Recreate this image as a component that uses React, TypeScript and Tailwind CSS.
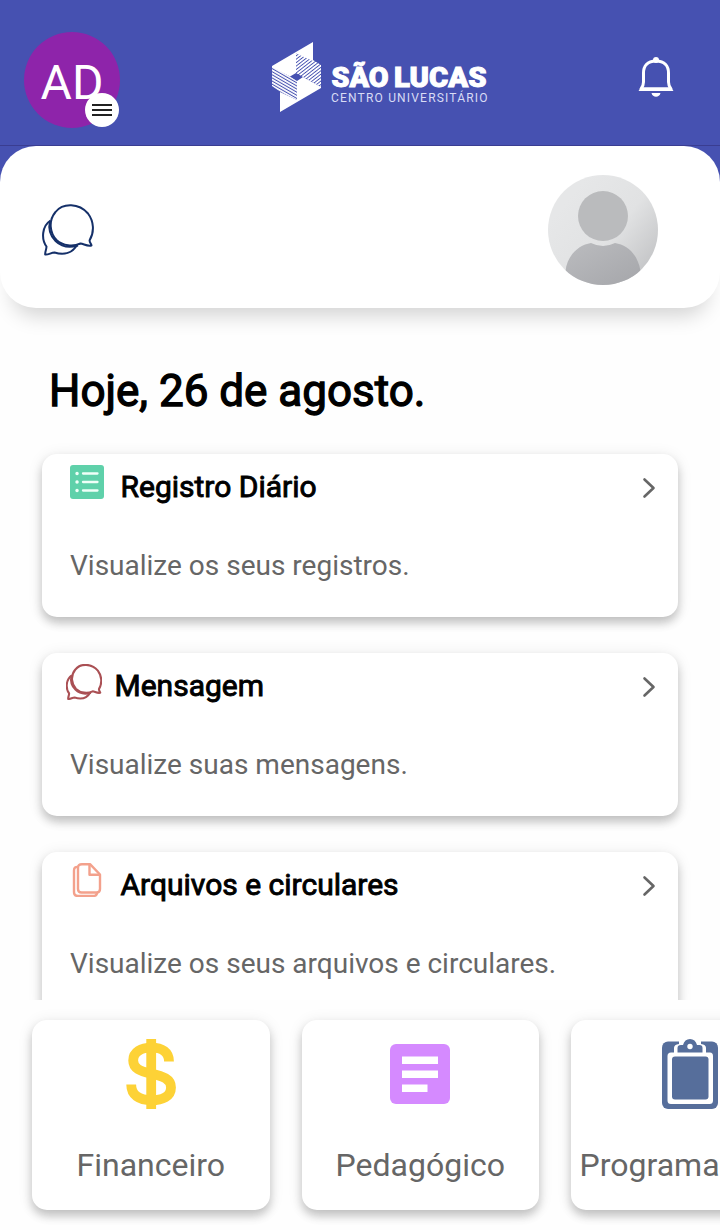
import type { ReactNode } from "react";

const ChatIcon = ({ className }: { className: string }) => (
    <svg viewBox="0 0 52 52" fill="none" stroke="currentColor" strokeLinejoin="round" className={className}>
        <path d="M47.600 36.300C52.500 28 52 17.500 46 9.500C37 -1 21 -1.500 13.500 8C6 17 8 29 14.500 36C21 42 31 43 38.500 39.500C42 40 45 42.500 49.500 41.500C49.300 40 47.500 38.500 47.600 36.300Z" />
        <path d="M8.500 16.500C0 22 -1 35 4.500 42.500C4.500 45.500 2.800 48 3.200 50.500C6.500 51 9 48.500 12.500 48.500C22 51.500 30.500 49 35 41" />
        <path d="M8 17C4.500 32 17 47 36 41.500" />
    </svg>
);

const ListIcon = () => (
    <svg viewBox="0 0 34 34" className="size-[34px]">
        <rect width="34" height="34" rx="3" fill="#5fd1aa" />
        <g stroke="#effff8" strokeWidth="2.300" strokeLinecap="round">
            <path d="M13 8.500H27.500M13 17H27.500M13 25.500H27.500" />
            <path d="M7 8.500H7.100M7 17H7.100M7 25.500H7.100" strokeWidth="3.400" />
        </g>
    </svg>
);

const FilesIcon = () => (
    <svg viewBox="0 0 34 34" fill="none" stroke="#f3a18c" strokeWidth="2.400" strokeLinejoin="round" className="size-[34px]">
        <path d="M8.500 4C5.500 3.500 4 4.500 4 7.500V29C4 32 5 33 8 33H23C26 33 27 32 27 29.500" />
        <path d="M12 1.200H20L30 11.500V26C30 28.500 29 29.500 26.500 29.500H11.500C9 29.500 8 28.500 8 26V5C8 2.500 9 1.200 12 1.200Z" />
        <path d="M19.500 1.500V11.700H30" />
    </svg>
);

const ChevronIcon = () => (
    <svg viewBox="0 0 14 22" fill="none" stroke="#666" strokeWidth="2.600" strokeLinecap="round" strokeLinejoin="round" className="h-[22px] w-[14px]">
        <path d="M2.500 2.500L11.500 11L2.500 19.500" />
    </svg>
);

const BellIcon = () => (
    <svg viewBox="0 0 36 42" className="h-[42px] w-9">
        <path d="M18 5C9 5 5.500 10.500 5.500 17V26C5.500 29 5 30.500 3 33H33C31 30.500 30.500 29 30.500 26V17C30.500 10.500 27 5 18 5Z" fill="none" stroke="white" strokeWidth="3" strokeLinejoin="round" />
        <path d="M.5 35L3 31.500H33L35.500 35Z" fill="white" />
        <circle cx="18" cy="4" r="3" fill="white" />
        <path d="M13.500 37H22.500C21.500 42 14.500 42 13.500 37Z" fill="white" />
    </svg>
);

const Logo = () => (
    <svg viewBox="0 0 216 72" fill="white" className="h-[72px] w-[216px]">
        <defs>
            <pattern id="hatchLeft" width="4" height="2.700" patternUnits="userSpaceOnUse" patternTransform="rotate(30)">
                <rect width="4" height="1.700" fill="white" />
            </pattern>
            <pattern id="hatchRight" width="4" height="2.700" patternUnits="userSpaceOnUse" patternTransform="rotate(-38)">
                <rect width="4" height="1.800" fill="white" />
            </pattern>
        </defs>
        <path d="M41 1V20L24 12.500V32L18 35.500L0 26V25Z" />
        <path d="M8 71V51L25 59V40L31 36L49 46V47Z" />
        <path d="M0 25L18 35.500L25 40V59L8 51L0 45Z" fill="url(#hatchLeft)" />
        <path d="M24 12.500L41 19L49 24V46L31 36L24 32Z" fill="url(#hatchRight)" />
        <g stroke="white" strokeWidth="1" className="font-[Roboto,sans-serif] text-[28px] font-black">
            <text x="59.500" y="45.500" textLength="57" lengthAdjust="spacingAndGlyphs">SÃO</text>
            <text x="122" y="45.500" textLength="92.500" lengthAdjust="spacingAndGlyphs">LUCAS</text>
        </g>
        <text x="59" y="60.500" textLength="156.500" fill="#d9dcf5" className="font-[Roboto,sans-serif] text-[12px]">CENTRO UNIVERSITÁRIO</text>
    </svg>
);

const DollarIcon = () => (
    <svg viewBox="0 0 50 70" fill="none" stroke="#fdd236" strokeWidth="9.800" className="h-[70px] w-[50px]">
        <path d="M43 22.500C43 13 36 8.700 25.500 8.700C15 8.700 7.200 13 7.200 21.500C7.200 29.500 14 32 25 34.500C37 37.200 45 40 45 48.500C45 57.500 36.500 61.200 25.500 61.200C13 61.200 5.200 56 5.200 45.500" />
        <path d="M25.200 0V70" />
    </svg>
);

const ArticleIcon = () => (
    <svg viewBox="0 0 60 60" className="size-[60px]">
        <rect width="60" height="60" rx="6" fill="#d58aff" />
        <path d="M12 12.500H48V20H12ZM12 26.500H48V34H12ZM12 40.500H37.500V48H12Z" fill="white" />
    </svg>
);

const ClipboardIcon = () => (
    <svg viewBox="0 0 56 70" className="h-[70px] w-14">
        <rect y="2.500" width="56" height="67.500" rx="6" fill="#566e9b" />
        <path d="M17 0H39V5Q44 5.500 44 9V13.500H48Q51 13.500 51 17V61.500Q51 65 47.500 65H9Q5.500 65 5.500 61.500V17Q5.500 13.500 9 13.500H12V9Q12 5.500 17 5Z" fill="white" />
        <rect x="10" y="17.500" width="36.500" height="43" rx="3" fill="#566e9b" />
        <path d="M15.500 13.500V9Q15.500 6 19 6H21C22 2 24.500 0 28 0C31.500 0 34 2 35 6H37.500Q40.500 6 40.500 9V13.500Z" fill="#566e9b" />
        <circle cx="28" cy="7.500" r="2.700" fill="white" />
    </svg>
);

const UserPhoto = () => (
    <svg viewBox="0 0 110 110" className="size-[110px]">
        <defs>
            <linearGradient id="photoBg" x1="0.2" y1="0.2" x2="1" y2="0.85">
                <stop offset="0" stopColor="#e6e7e8" />
                <stop offset=".5" stopColor="#e1e2e3" />
                <stop offset="1" stopColor="#c0c1c3" />
            </linearGradient>
            <linearGradient id="photoBody" x1="0" y1="0" x2="1" y2="1">
                <stop offset="0" stopColor="#bbbcbf" />
                <stop offset="1" stopColor="#a5a6aa" />
            </linearGradient>
            <clipPath id="photoClip"><circle cx="55" cy="55" r="55" /></clipPath>
        </defs>
        <g clipPath="url(#photoClip)">
            <rect width="110" height="110" fill="url(#photoBg)" />
            <path d="M17.500 96C19 81 30 70 43 68Q55 74 67 68C80 70 90 80 92.500 96V110H17.500Z" fill="url(#photoBody)" />
            <circle cx="55" cy="41" r="25" fill="#babbbd" />
        </g>
    </svg>
);

type CardProps = { icon: ReactNode; title: string; text: string; titleClass: string };

const cards: CardProps[] = [
    { icon: <ListIcon />, title: "Registro Diário", text: "Visualize os seus registros.", titleClass: "pl-[16.500px]" },
    { icon: <ChatIcon className="-ml-1 size-9 stroke-[3px] text-[#aa5054]" />, title: "Mensagem", text: "Visualize suas mensagens.", titleClass: "pl-[12.500px]" },
    { icon: <FilesIcon />, title: "Arquivos e circulares", text: "Visualize os seus arquivos e circulares.", titleClass: "pl-[16.500px]" },
];

const Card = ({ icon, title, text, titleClass }: CardProps) => (
    <div className="h-[163px] shrink-0 rounded-[15px] bg-white pl-7 pr-[22px] shadow-[0_6px_10px_rgba(0,0,0,0.2),0_2px_16px_rgba(0,0,0,0.09)]">
        <div className="flex h-[66px] items-start">
            <div className="pt-[11px]">{icon}</div>
            <h2 className={`grow pt-[15px] text-[30px] leading-9 [-webkit-text-stroke:0.9px_black] ${titleClass}`}>{title}</h2>
            <div className="pt-[23px]"><ChevronIcon /></div>
        </div>
        <p className="pt-[28px] text-[28px] leading-9 text-[#666]">{text}</p>
    </div>
);

const shortcuts = [
    { icon: <DollarIcon />, label: "Financeiro", labelClass: "" },
    { icon: <ArticleIcon />, label: "Pedagógico", labelClass: "" },
    { icon: <ClipboardIcon />, label: "Programação", labelClass: "self-start pl-[8.500px]" },
];

const App = () => {
    return (
        <div className="flex h-[1230px] w-[720px] flex-col overflow-hidden bg-[#fefefe] font-[Roboto,sans-serif] text-black">
            <header className="h-[182px] shrink-0 bg-[#4651b1]">
                <div className="flex h-[146px] items-start justify-between border-b border-[#3a3d91] pl-6 pr-[46px]">
                    <div className="relative mt-8 flex size-24 items-center justify-center rounded-full bg-[#8e24aa]">
                        <span className="pt-1.5 text-[48px] leading-none text-white">AD</span>
                        <div className="absolute left-[61px] top-[61px] flex size-[34px] flex-col items-center justify-center gap-[3px] rounded-full bg-white">
                            <span className="h-[2px] w-[20px] bg-[#222]" />
                            <span className="h-[2px] w-[20px] bg-[#222]" />
                            <span className="h-[2px] w-[20px] bg-[#222]" />
                        </div>
                    </div>
                    <div className="ml-[2px] mt-[41px]"><Logo /></div>
                    <div className="mt-14"><BellIcon /></div>
                </div>
            </header>

            <section className="-mt-9 flex h-[162px] shrink-0 items-center justify-between rounded-[36px] bg-white pl-[42px] pr-[62px] pt-1.5 shadow-[0_20px_20px_-12px_rgba(0,0,0,0.17)]">
                <ChatIcon className="size-[52px] stroke-2 text-[#153069]" />
                <UserPhoto />
            </section>

            <main className="flex h-[692px] shrink-0 flex-col overflow-hidden px-[42px]">
                <h1 className="h-[146px] shrink-0 pl-[7px] pt-[55px] text-[44px] leading-[56px] [-webkit-text-stroke:1.3px_black]">Hoje, 26 de agosto.</h1>
                <div className="flex flex-col gap-9">
                    {cards.map((card) => <Card key={card.title} {...card} />)}
                </div>
            </main>

            <nav className="flex grow gap-8 pl-8 pt-5">
                {shortcuts.map(({ icon, label, labelClass }) => (
                    <div key={label} className="flex h-[190px] w-[237.500px] shrink-0 flex-col items-center rounded-[15px] bg-white shadow-[0_6px_10px_rgba(0,0,0,0.2),0_2px_16px_rgba(0,0,0,0.09)]">
                        <div className="flex h-[108px] items-center">{icon}</div>
                        <span className={`pt-[17px] text-[32px] leading-10 text-[#666] ${labelClass}`}>{label}</span>
                    </div>
                ))}
            </nav>
        </div>
    );
}

export default App;
